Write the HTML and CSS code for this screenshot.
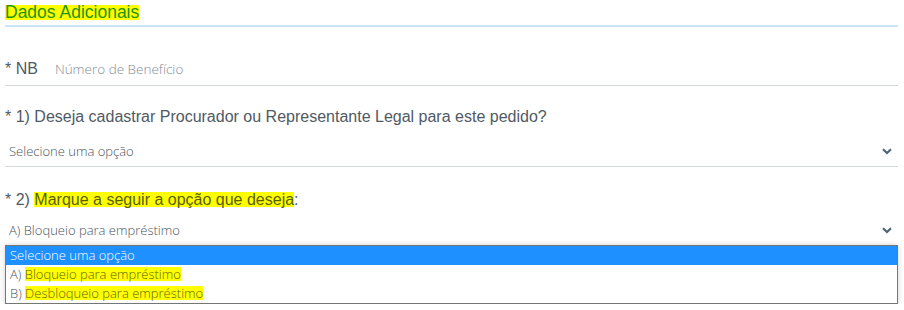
FILE: index.html
```html
<!DOCTYPE html>
<html lang="pt-BR">
<head>
  <meta charset="UTF-8" />
  <meta name="viewport" content="width=device-width, initial-scale=1.0"/>
  <title>Dados Adicionais</title>
  <link rel="stylesheet" href="styles.css">
</head>
<body>
  <div class="form">
    <div class="sectionTitle">
      <span class="mark title">Dados Adicionais</span>
    </div>

    <div class="field nb">
      <label for="nbInput">* NB</label>
      <input type="text" id="nbInput" placeholder="Número de Benefício">
    </div>

    <p class="question q1">* 1) Deseja cadastrar Procurador ou Representante Legal para este pedido?</p>
    <div class="field select s1">
      <span>Selecione uma opção</span>
      <svg class="chevron" width="10" height="7" viewBox="0 0 10 7"><path d="M1 1.2 L5 5 L9 1.2" fill="none" stroke="#4b6577" stroke-width="2.2"/></svg>
    </div>

    <p class="question q2">* 2) <span class="mark">Marque a seguir a opção que deseja</span>:</p>
    <div class="field select s2">
      <span>A) Bloqueio para empréstimo</span>
      <svg class="chevron" width="10" height="7" viewBox="0 0 10 7"><path d="M1 1.2 L5 5 L9 1.2" fill="none" stroke="#4b6577" stroke-width="2.2"/></svg>
    </div>
    <ul class="options">
      <li class="active">Selecione uma opção</li>
      <li>A) <span class="mark">Bloqueio para empréstimo</span></li>
      <li>B) <span class="mark">Desbloqueio para empréstimo</span></li>
    </ul>
  </div>
</body>
</html>
```

FILE: styles.css
```css
* {
  margin: 0;
  padding: 0;
  box-sizing: border-box;
}

body {
  background: #fff;
  font-family: 'Liberation Sans', Arial, sans-serif;
  color: #505a64;
}

.form {
  padding: 0 6px 0 5px;
}

.mark {
  display: inline-block;
  height: 15px;
  line-height: 15px;
  background: #ffff00;
  color: #5a6000;
}

.sectionTitle {
  padding-top: 4px;
  height: 27px;
  border-bottom: 2px solid #c8e6f6;
}

.title {
  font-size: 17.5px;
  color: #23920e;
}

.field {
  display: flex;
  align-items: center;
  border-bottom: 1px solid #d3d9df;
}

.nb {
  margin-top: 26px;
  height: 33px;
  gap: 17px;
}

.nb label {
  font-size: 16px;
}

.nb input {
  border: none;
  outline: none;
  flex: 1;
  font-family: 'Open Sans', sans-serif;
  font-weight: 300;
  font-size: 13.5px;
}

.nb input::placeholder {
  color: #7f8c99;
}

.question {
  font-size: 16px;
  line-height: 20px;
}

.q1 {
  margin-top: 21px;
}

.q2 {
  margin-top: 23px;
}

.select {
  height: 31px;
  padding: 0 6px 0 4px;
  justify-content: space-between;
  font-family: 'Open Sans', sans-serif;
  font-weight: 300;
  font-size: 13px;
  color: #4a545e;
}

.s1 {
  margin-top: 9px;
}

.s2 {
  margin-top: 5px;
}

/* open dropdown list, drawn over the select's underline */
.options {
  margin-top: -1px;
  list-style: none;
  background: #fff;
  border: 1px solid #767676;
  box-shadow: 0 0 6px rgba(0, 0, 0, 0.18);
  font-family: 'Open Sans', sans-serif;
  font-weight: 300;
  font-size: 13px;
  color: #4a545e;
}

.options li {
  height: 19px;
  line-height: 19px;
  padding-left: 4px;
}

.options li.active {
  background: #1e90ff;
  color: #fff;
}

.options .mark {
  height: 14px;
  line-height: 14px;
  color: #5e6400;
}
```
